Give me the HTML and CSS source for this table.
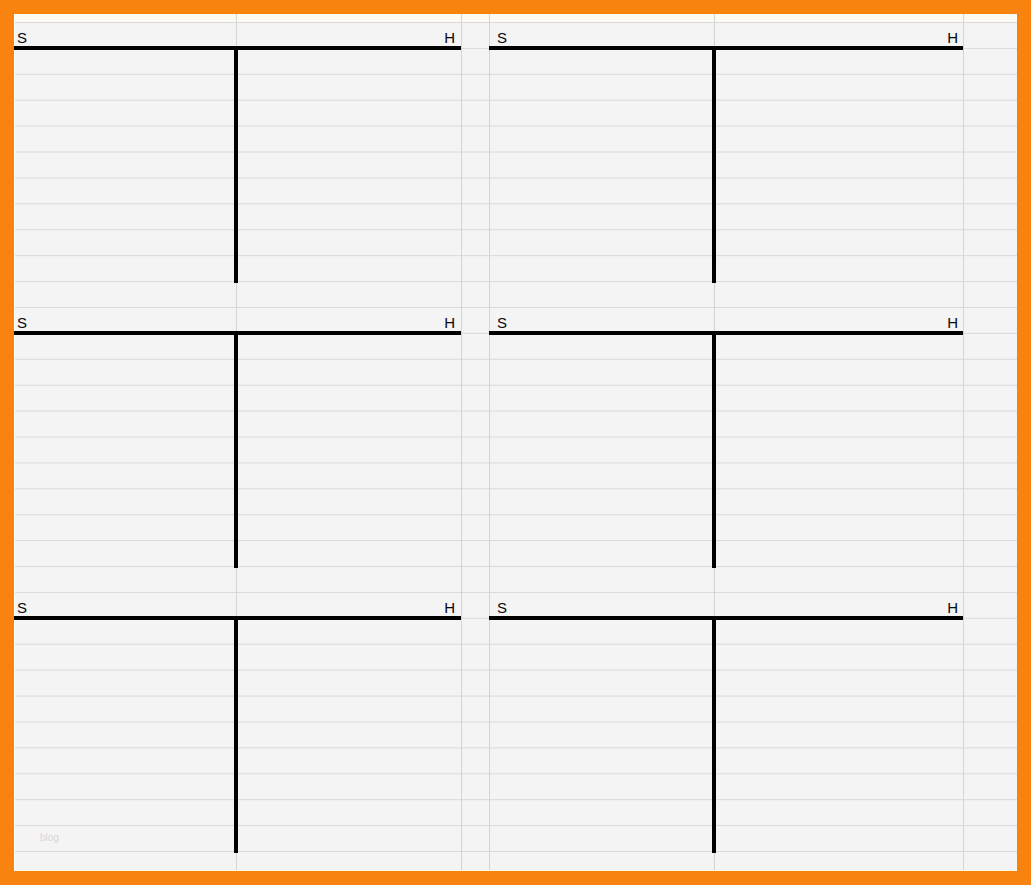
FILE: index.html
```html
<!DOCTYPE html>
<html lang="de">
<head>
  <meta charset="UTF-8">
  <title>T-Konten Vorlage</title>
  <link rel="stylesheet" href="styles.css">
</head>
<body>
  <div class="sheet">
    <div class="konto left">
      <div class="konto-head"><span>S</span><span>H</span></div>
      <div class="konto-body"><div class="soll"></div><div class="haben"></div></div>
    </div>
    <div class="konto right">
      <div class="konto-head"><span>S</span><span>H</span></div>
      <div class="konto-body"><div class="soll"></div><div class="haben"></div></div>
    </div>
    <div class="konto left">
      <div class="konto-head"><span>S</span><span>H</span></div>
      <div class="konto-body"><div class="soll"></div><div class="haben"></div></div>
    </div>
    <div class="konto right">
      <div class="konto-head"><span>S</span><span>H</span></div>
      <div class="konto-body"><div class="soll"></div><div class="haben"></div></div>
    </div>
    <div class="konto left">
      <div class="konto-head"><span>S</span><span>H</span></div>
      <div class="konto-body"><div class="soll"></div><div class="haben"></div></div>
    </div>
    <div class="konto right">
      <div class="konto-head"><span>S</span><span>H</span></div>
      <div class="konto-body"><div class="soll"></div><div class="haben"></div></div>
    </div>
    <span class="watermark">blog</span>
  </div>
</body>
</html>
```

FILE: styles.css
```css
:root {
  --frame: #f9830f;
  --paper: #f4f4f4;
  --row-line: #d9d9d9;
  --col-line: #d4d4d4;
  --row-height: 25.909px;
}

* {
  box-sizing: border-box;
  margin: 0;
  padding: 0;
}

html, body {
  height: 100%;
}

body {
  background-color: var(--frame);
  padding: 14px;
  font-family: 'Liberation Sans', Arial, sans-serif;
}

.sheet {
  position: relative;
  height: 857px;
  overflow: hidden;
  padding-top: 8px;
  display: grid;
  grid-template-columns: 447px 474px;
  grid-auto-rows: 285px;
  column-gap: 28px;
  background-color: var(--paper);
  /* column lines of the spreadsheet, then the row lines */
  background-image:
    linear-gradient(to right,
      transparent 222px, var(--col-line) 222px, var(--col-line) 223px, transparent 223px,
      transparent 447px, var(--col-line) 447px, var(--col-line) 448px, transparent 448px,
      transparent 475px, var(--col-line) 475px, var(--col-line) 476px, transparent 476px,
      transparent 700px, var(--col-line) 700px, var(--col-line) 701px, transparent 701px,
      transparent 949px, var(--col-line) 949px, var(--col-line) 950px, transparent 950px),
    linear-gradient(var(--row-line) 1px, transparent 1px),
    linear-gradient(#fbfaf3, #fbfaf3);
  background-size: 100% 100%, 100% var(--row-height), 100% 8px;
  background-position: 0 0, 0 8px, 0 0;
  background-repeat: no-repeat, repeat, no-repeat;
  box-shadow: inset 1px 0 0 #ffffff, inset 0 -1px 0 #fff7e0;
}

.konto-head {
  height: 28px;
  display: flex;
  justify-content: space-between;
  align-items: flex-end;
  border-bottom: 4px solid #000;
  font-size: 15px;
  line-height: 16px;
  color: #0a0a0a;
  padding: 0 6px 0 3px;
}

.konto.right .konto-head {
  padding: 0 5px 0 8px;
}

.konto-body {
  display: flex;
  height: 233px;
}

.soll {
  width: 224px;
  border-right: 4px solid #000;
}

.konto.right .soll {
  width: 227px;
}

.haben {
  flex: 1;
}

.watermark {
  position: absolute;
  left: 26px;
  top: 818px;
  font-size: 10px;
  color: #d6d6d6;
}
```
